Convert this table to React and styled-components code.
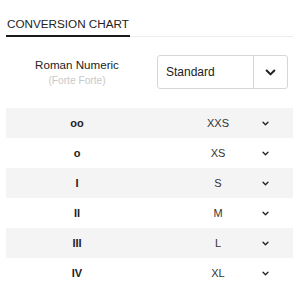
import React from "react";
import styled, { createGlobalStyle } from "styled-components";

const GlobalStyle = createGlobalStyle`
  body {
    margin: 0;
    background: #fff;
    font-family: "Liberation Sans", Arial, sans-serif;
    color: #222;
  }
`;

const sizes = [
  { roman: "oo", size: "XXS" },
  { roman: "o", size: "XS" },
  { roman: "I", size: "S" },
  { roman: "II", size: "M" },
  { roman: "III", size: "L" },
  { roman: "IV", size: "XL" }
];

const Chevron = ({ size = 8, stroke = 1.8 }) => (
  <svg width={size} height={size} viewBox="0 0 10 10">
    <polyline
      points="1.5,3.2 5,6.7 8.5,3.2"
      fill="none"
      stroke="#222"
      strokeWidth={stroke}
      strokeLinecap="round"
      strokeLinejoin="round"
    />
  </svg>
);

const App = () => (
  <Page>
    <GlobalStyle />
    <Tabs>
      <Tab>CONVERSION CHART</Tab>
    </Tabs>
    <FilterRow>
      <Label>
        <span className="main">Roman Numeric</span>
        <span className="sub">(Forte Forte)</span>
      </Label>
      <Select>
        <span className="value">Standard</span>
        <span className="toggle">
          <Chevron size={11} stroke={1.9} />
        </span>
      </Select>
    </FilterRow>
    <Table>
      {sizes.map((row, i) => (
        <Row key={row.size} $striped={i % 2 === 0}>
          <Roman>{row.roman}</Roman>
          <Size>{row.size}</Size>
          <Toggle>
            <Chevron size={7} stroke={1.9} />
          </Toggle>
        </Row>
      ))}
    </Table>
  </Page>
);

const Page = styled.div`
  width: 300px;
  padding: 0 7px 0 6px;
  box-sizing: border-box;
`;

const Tabs = styled.div`
  display: flex;
  padding-top: 17px;
  border-bottom: 1px solid #ececec;
`;

const Tab = styled.div`
  font-size: 11.7px;
  line-height: 14px;
  white-space: nowrap;
  color: #222;
  padding: 0 1px 4px 1px;
  border-bottom: 2px solid #1a1a1a;
  margin-bottom: -1px;
`;

const FilterRow = styled.div`
  display: grid;
  grid-template-columns: 142px 131px;
  column-gap: 9px;
  align-items: center;
  margin-top: 18px;
`;

const Label = styled.div`
  display: flex;
  flex-direction: column;
  align-items: center;
  .main {
    font-size: 11.6px;
    line-height: 15px;
    color: #222;
  }
  .sub {
    margin-top: 2px;
    font-size: 10.2px;
    line-height: 13px;
    color: #c8c8c8;
  }
`;

const Select = styled.div`
  display: flex;
  height: 34px;
  border: 1px solid #d6d6d6;
  border-radius: 3px;
  box-sizing: border-box;
  .value {
    flex: 1;
    display: flex;
    align-items: center;
    padding-left: 8px;
    font-size: 12px;
    color: #222;
  }
  .toggle {
    width: 33px;
    display: flex;
    align-items: center;
    justify-content: center;
    border-left: 1px solid #d6d6d6;
  }
`;

const Table = styled.div`
  margin-top: 19px;
`;

const Row = styled.div`
  display: grid;
  grid-template-columns: 142px 1fr 24px;
  align-items: center;
  height: 30px;
  padding-right: 16px;
  background: ${p => (p.$striped ? "#f4f4f4" : "transparent")};
`;

const Roman = styled.div`
  text-align: center;
  font-size: 11px;
  font-weight: bold;
  color: #222;
`;

const Size = styled.div`
  text-align: center;
  padding-left: 35px;
  font-size: 11px;
  color: #333;
`;

const Toggle = styled.div`
  display: flex;
  justify-content: center;
  align-items: center;
`;

export default App;
